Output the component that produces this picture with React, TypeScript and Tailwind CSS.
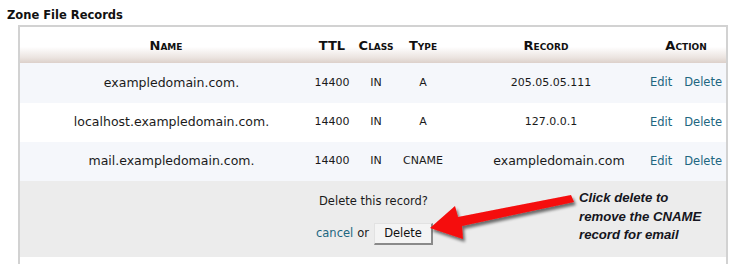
import React from "react";

const cols = "grid grid-cols-[292px_40px_48px_46px_200px_80px]";

const records = [
  { name: "exampledomain.com.", ttl: "14400", cls: "IN", type: "A", record: "205.05.05.111", big: false, shade: true },
  { name: "localhost.exampledomain.com.", ttl: "14400", cls: "IN", type: "A", record: "127.0.0.1", big: false, shade: false },
  { name: "mail.exampledomain.com.", ttl: "14400", cls: "IN", type: "CNAME", record: "exampledomain.com", big: true, shade: true },
];

function Callout() {
  // arrow + note drawn over the confirm row
  return (
    <div className="pointer-events-none absolute left-0 top-0">
      <svg width="737" height="264" className="absolute left-0 top-0">
        <defs>
          <filter id="sh" x="-20%" y="-40%" width="140%" height="180%">
            <feGaussianBlur in="SourceAlpha" stdDeviation="1.8" />
            <feOffset dx="2" dy="3" result="b" />
            <feComponentTransfer>
              <feFuncA type="linear" slope="0.55" />
            </feComponentTransfer>
            <feMerge>
              <feMergeNode />
              <feMergeNode in="SourceGraphic" />
            </feMerge>
          </filter>
        </defs>
        <polygon
          points="430,228 455,206 458,217 571,195 574,202 462,226 463,239"
          fill="#f50a0a"
          filter="url(#sh)"
        />
      </svg>
      <div className="absolute left-[579px] top-[189px] w-[150px] font-['Liberation_Sans',Arial,sans-serif] text-[13.2px] font-bold italic leading-[18.5px] text-[#151520]">
        <div>Click delete to</div>
        <div>remove the CNAME</div>
        <div>record for email</div>
      </div>
    </div>
  );
}

export default function App() {
  return (
    <div className="relative h-[264px] w-[737px] overflow-hidden bg-white font-['DejaVu_Sans',Verdana,sans-serif] text-[#1a1a1a]">
      <h2 className="pl-[7px] pt-[8px] text-[11.5px] font-bold leading-[14px] text-[#111]">Zone File Records</h2>

      <div className="ml-[18px] mt-[3px] h-[300px] w-[710px] border-2 border-b-0 border-[#d2d2d2]">
        {/* header */}
        <div className={`${cols} h-[36px] items-center bg-[linear-gradient(to_bottom,#ffffff_0%,#ffffff_55%,#ebe4e0_85%,#dcd0ca_100%)] text-[13px] font-bold text-[#111] [font-variant-caps:small-caps]`}>
          <div className="pt-[1px] text-center">Name</div>
          <div className="pt-[1px] text-center">TTL</div>
          <div className="pt-[1px] text-center">Class</div>
          <div className="pt-[1px] text-center">Type</div>
          <div className="pt-[1px] text-center">Record</div>
          <div className="pt-[1px] text-center">Action</div>
        </div>

        {records.map((r, i) => (
          <div
            key={r.name}
            className={`${cols} items-center ${i === 0 ? "h-[40px]" : "h-[39px]"} ${r.shade ? "bg-[#f5f7fb]" : "bg-white"}`}
          >
            <div className="pl-[11px] text-center text-[12.5px]">{r.name}</div>
            <div className="text-center text-[11px]">{r.ttl}</div>
            <div className="text-center text-[11px]">{r.cls}</div>
            <div className="text-center text-[11px]">{r.type}</div>
            <div className={`text-center ${r.big ? "pl-[26px] text-[12.5px]" : "pl-[10px] text-[11px]"}`}>{r.record}</div>
            <div className="flex justify-center gap-[12px] text-[11.5px] text-[#216680]">
              <span>Edit</span>
              <span>Delete</span>
            </div>
          </div>
        ))}

        {/* delete confirmation */}
        <div className="h-[76px] bg-[#ececec] pl-[292px] text-[11.5px] text-[#1a1a1a]">
          <div className="pl-[7px] pt-[13px] leading-[14px]">Delete this record?</div>
          <div className="mt-[15px] flex items-center pl-[4px]">
            <span className="text-[#216680]">cancel</span>
            <span className="ml-[4px]">or</span>
            <button className="ml-[5px] h-[22px] w-[59px] border border-b-2 border-r-2 border-b-[#8a8a8a] border-l-[#e2e2e2] border-r-[#8a8a8a] border-t-[#e2e2e2] bg-[#f4f4f4] text-[11.5px] text-[#111]">
              Delete
            </button>
          </div>
        </div>
      </div>

      <Callout />
    </div>
  );
}
